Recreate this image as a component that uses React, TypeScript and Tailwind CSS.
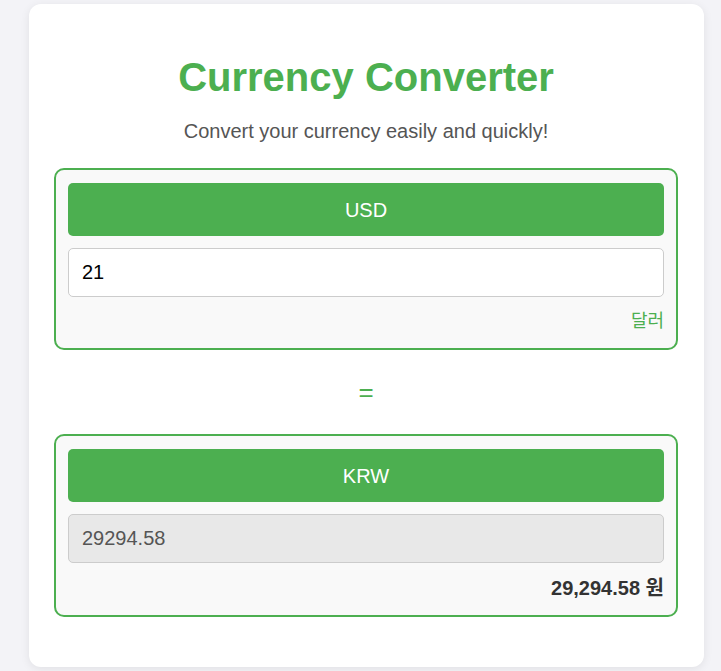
import React from 'react'

type BoxProps = {
  code: string
  value: string
  readOnly?: boolean
  label: React.ReactNode
}

const CurrencyBox = ({ code, value, readOnly, label }: BoxProps) => (
  <div className="rounded-[10px] border-2 border-[#4caf50] bg-[#f9f9f9] px-3 pt-[13px] pb-[14px]">
    <button className="block h-[53px] w-full rounded-[5px] bg-[#4caf50] text-[20px] text-white">
      {code}
    </button>
    <input
      className={`mt-3 block h-[49px] w-full rounded-[5px] border border-[#cccccc] px-[13px] text-[20px] outline-none ${
        readOnly ? 'bg-[#e8e8e8] text-[#555555]' : 'bg-white text-black'
      }`}
      value={value}
      readOnly={readOnly}
      onChange={() => {}}
    />
    {label}
  </div>
)

export default function App() {
  return (
    <div
      className="min-h-[671px] bg-[#f3f3f7] pt-1"
      style={{ fontFamily: '"Liberation Sans", Arial, "Noto Sans CJK KR", sans-serif' }}
    >
      <div className="ml-[29px] w-[675px] rounded-xl bg-white pt-[50px] pr-[26px] pb-[50px] pl-[25px] shadow-[0_2px_10px_rgba(0,0,0,0.08)]">
        <h1 className="text-center text-[40px] leading-[46px] font-bold text-[#4caf50]">
          Currency Converter
        </h1>
        <p className="mt-[20px] text-center text-[20px] leading-[23px] text-[#555555]">
          Convert your currency easily and quickly!
        </p>

        <div className="mt-[25px]">
          <CurrencyBox
            code="USD"
            value="21"
            label={
              <div className="mt-3 text-right text-[18px] leading-[25px] text-[#4caf50]">달러</div>
            }
          />
        </div>

        <div className="mt-[27px] mb-[27px] text-center text-[26px] leading-[30px] text-[#4caf50]">=</div>

        <CurrencyBox
          code="KRW"
          value="29294.58"
          readOnly
          label={
            <div className="mt-[13px] text-right text-[20px] leading-[25px] font-bold text-[#333333]">
              29,294.58 원
            </div>
          }
        />
      </div>
    </div>
  )
}
